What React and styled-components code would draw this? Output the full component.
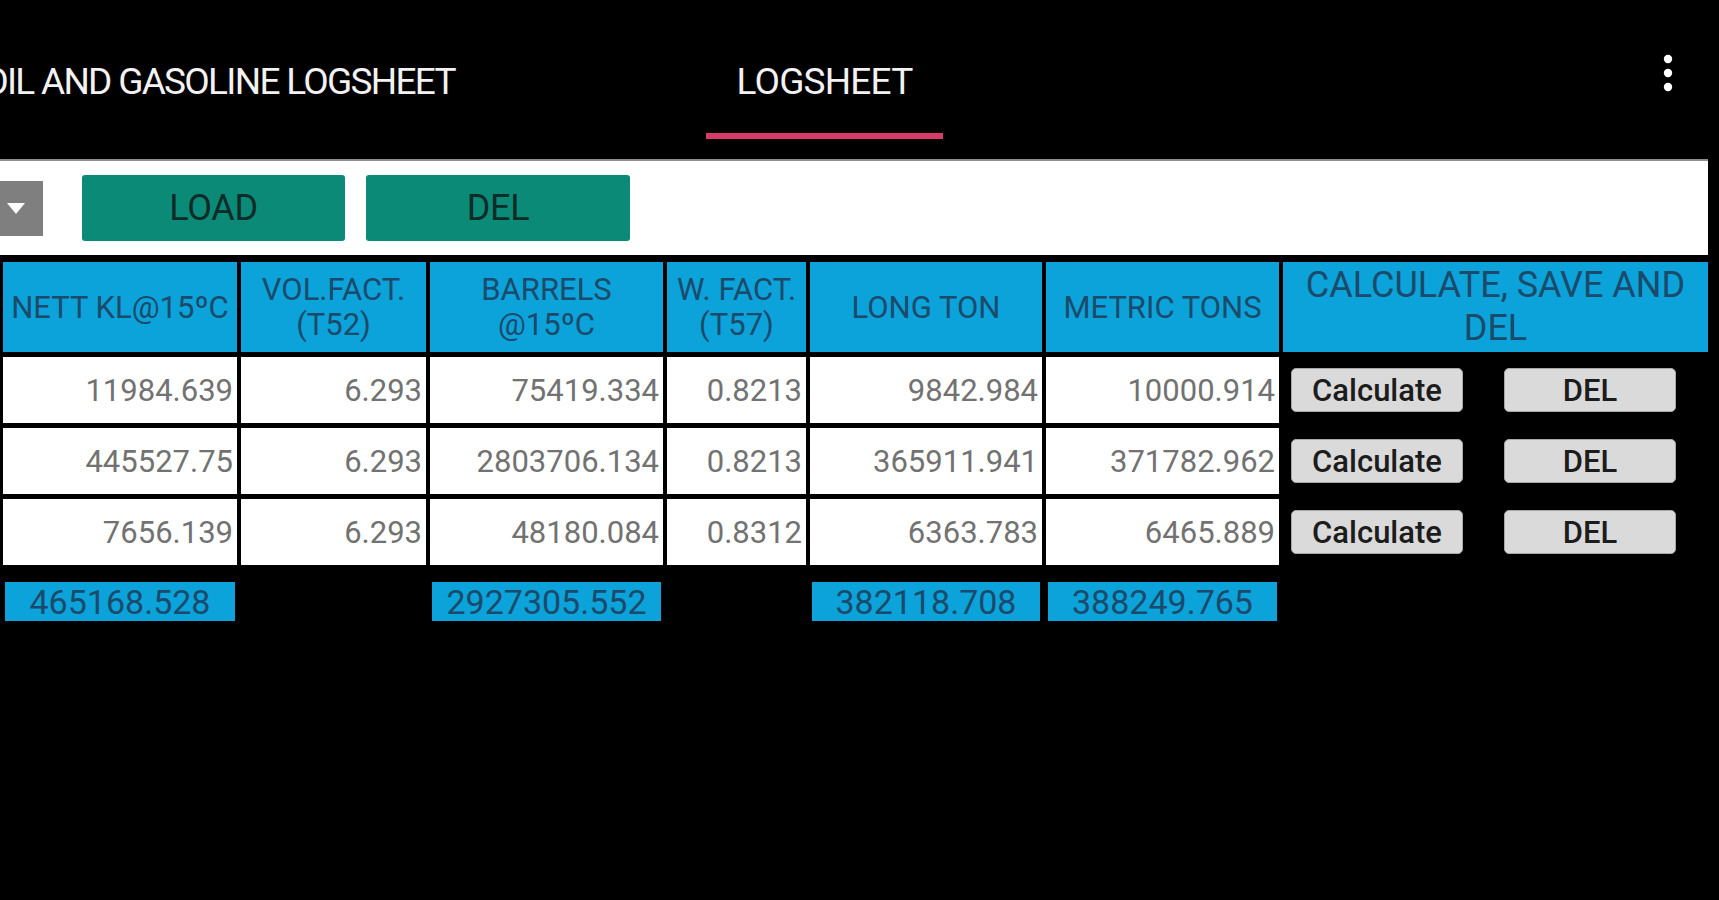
import styled, { createGlobalStyle } from "styled-components";

const GlobalStyle = createGlobalStyle`
  html, body {
    margin: 0;
    padding: 0;
    background: #000;
  }
  body {
    font-family: Roboto, "Liberation Sans", Arial, sans-serif;
    overflow: hidden;
  }
`;

const Screen = styled.div`
  width: 1719px;
  height: 900px;
  background: #000;
  overflow: hidden;
`;

const AppBar = styled.header`
  height: 159px;
  display: flex;
  align-items: flex-start;
  padding-right: 46px;
  overflow: hidden;
`;

// tab strip is scrolled, so the first tab runs off the left edge
const TabStrip = styled.nav`
  display: flex;
  margin-left: -268px;
`;

const Tab = styled.div`
  flex: 0 0 ${(p) => p.$width}px;
  padding-top: 63px;
  display: flex;
  flex-direction: column;
  align-items: center;
`;

const TabLabel = styled.span`
  font-size: 37px;
  line-height: 37px;
  letter-spacing: ${(p) => (p.$tight ? -1.7 : -0.8)}px;
  color: #f2f2f2;
  white-space: nowrap;
`;

const TabIndicator = styled.div`
  align-self: stretch;
  height: 6px;
  margin-top: 33px;
  background: ${(p) => (p.$active ? "#d83a6c" : "transparent")};
`;

const MenuButton = styled.div`
  margin-left: auto;
  margin-top: 54px;
  display: flex;
`;

const Toolbar = styled.div`
  width: 1708px;
  height: 94px;
  border-top: 2px solid #8e8e8e;
  background: #fff;
  display: flex;
  align-items: center;
  gap: 21px;
`;

const Spinner = styled.div`
  width: 43px;
  height: 55px;
  margin-right: 18px;
  background: #7f7f7f;
  display: flex;
  align-items: center;
  padding-left: 7px;
  box-sizing: border-box;

  &::after {
    content: "";
    border-left: 9px solid transparent;
    border-right: 9px solid transparent;
    border-top: 11px solid #fff;
  }
`;

const ActionButton = styled.button`
  width: ${(p) => p.$width}px;
  height: 66px;
  padding: 0;
  border: none;
  border-radius: 3px;
  background: #0b8a78;
  color: #0f2b28;
  font-family: inherit;
  font-size: 36px;
  letter-spacing: -0.3px;
`;

const Grid = styled.div`
  display: grid;
  width: 1708px;
  box-sizing: border-box;
  padding-left: 3px;
  margin-top: 7px;
  grid-template-columns: 234px 185px 233px 139px 232px 233px 425px;
  grid-template-rows: 90px repeat(3, 66px) auto;
  column-gap: 4px;
  row-gap: 5px;
`;

const HeadCell = styled.div`
  background: #0ba3d9;
  color: #1b4a6b;
  font-size: ${(p) => (p.$large ? 36 : 31)}px;
  line-height: ${(p) => (p.$large ? 43 : 35)}px;
  text-align: center;
  white-space: pre-line;
  display: flex;
  align-items: center;
  justify-content: center;
  overflow: hidden;
`;

const DataCell = styled.div`
  background: #fff;
  color: #727272;
  font-size: 31px;
  padding-right: 4px;
  display: flex;
  align-items: center;
  justify-content: flex-end;
  white-space: nowrap;
`;

const ActionCell = styled.div`
  display: flex;
  align-items: center;
  gap: 41px;
  padding-left: 8px;
`;

const RowButton = styled.button`
  width: 172px;
  height: 44px;
  padding: 0;
  border: 1px solid #a8a8a8;
  border-radius: 5px;
  background: #dadada;
  color: #1c1c1c;
  font-family: inherit;
  font-size: 31px;
  font-weight: 500;
  line-height: 1;
`;

const TotalCell = styled.div`
  height: 39px;
  margin: 12px 2px 0;
  background: ${(p) => (p.$empty ? "transparent" : "#0ba3d9")};
  color: #1b4a6b;
  font-size: 34px;
  display: flex;
  align-items: center;
  justify-content: center;
`;

const headers = [
  "NETT KL@15ºC",
  "VOL.FACT.\n(T52)",
  "BARRELS\n@15ºC",
  "W. FACT.\n(T57)",
  "LONG TON",
  "METRIC TONS",
];

const rows = [
  ["11984.639", "6.293", "75419.334", "0.8213", "9842.984", "10000.914"],
  ["445527.75", "6.293", "2803706.134", "0.8213", "365911.941", "371782.962"],
  ["7656.139", "6.293", "48180.084", "0.8312", "6363.783", "6465.889"],
];

const totals = ["465168.528", "", "2927305.552", "", "382118.708", "388249.765"];

const App = () => {
  return (
    <Screen>
      <GlobalStyle />
      <AppBar>
        <TabStrip>
          <Tab $width={974}>
            <TabLabel $tight>OIL AND GASOLINE LOGSHEET</TabLabel>
            <TabIndicator />
          </Tab>
          <Tab $width={237}>
            <TabLabel>LOGSHEET</TabLabel>
            <TabIndicator $active />
          </Tab>
        </TabStrip>
        <MenuButton>
          <svg width="10" height="38" viewBox="0 0 10 38">
            <circle cx="5" cy="5" r="4.2" fill="#fff" />
            <circle cx="5" cy="19" r="4.2" fill="#fff" />
            <circle cx="5" cy="33" r="4.2" fill="#fff" />
          </svg>
        </MenuButton>
      </AppBar>

      <Toolbar>
        <Spinner />
        <ActionButton $width={263}>LOAD</ActionButton>
        <ActionButton $width={264}>DEL</ActionButton>
      </Toolbar>

      <Grid>
        {headers.map((h, i) => (
          <HeadCell key={i}>{h}</HeadCell>
        ))}
        <HeadCell $large>CALCULATE, SAVE AND DEL</HeadCell>

        {rows.map((row, r) => [
          ...row.map((v, c) => <DataCell key={`${r}-${c}`}>{v}</DataCell>),
          <ActionCell key={`${r}-a`}>
            <RowButton>Calculate</RowButton>
            <RowButton>DEL</RowButton>
          </ActionCell>,
        ])}

        {totals.map((t, i) => (
          <TotalCell key={i} $empty={!t}>
            {t}
          </TotalCell>
        ))}
      </Grid>
    </Screen>
  );
};

export default App;
